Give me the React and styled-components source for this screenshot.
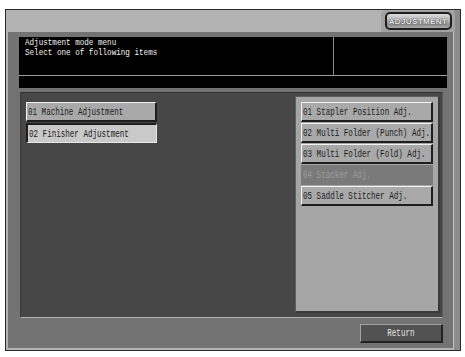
import React from 'react';
import styled, { createGlobalStyle } from 'styled-components';

const Global = createGlobalStyle`
  html, body { margin: 0; padding: 0; background: #ffffff; }
  body {
    width: 465px; height: 357px; overflow: hidden;
    font-family: "Liberation Mono", "DejaVu Sans Mono", monospace;
  }
  * { box-sizing: border-box; }
`;

const Frame = styled.div`
  margin: 9px 0 0 5px;
  width: 456px;
  height: 342px;
  border: 1px solid #2b2b2b;
  background: #b3b3b3;
  box-shadow: inset -6px 0 0 #8c8c8c;
  display: flex;
  flex-direction: column;
`;

const TopBar = styled.div`
  height: 23px;
  display: flex;
  justify-content: flex-end;
  align-items: flex-end;
  padding-right: 5px;
`;

const Tab = styled.div`
  width: 74px;
  height: 22px;
  background: #a2a2a2;
  border-radius: 5px 5px 0 0;
  display: flex;
  align-items: flex-start;
  justify-content: center;
  padding-top: 2px;
`;

const AdjButton = styled.div`
  width: 67px;
  height: 18px;
  border: 2px solid #1e1e1e;
  border-radius: 5px;
  background: linear-gradient(#dcdcdc 0%, #b4b4b4 45%, #8e8e8e 75%, #a8a8a8 100%);
  display: flex;
  align-items: center;
  justify-content: center;
  font-family: "Liberation Sans", Arial, sans-serif;
  font-weight: bold;
  font-size: 8px;
  letter-spacing: 0.4px;
  color: #ececec;
  text-shadow: 0 0 1px #303030, 0 0 1px #303030;
`;

const Inner = styled.div`
  flex: 1;
  margin: 0 7px 2px 2px;
  background: #737373;
  box-shadow: 1px 0 0 #c4c4c4;
  padding: 5px 6px 5px 11px;
  display: flex;
  flex-direction: column;
`;

const MessageBox = styled.div`
  height: 38px;
  background: #000;
  display: grid;
  grid-template-columns: 1fr 114px;
`;

const MessageText = styled.div`
  padding: 1px 0 0 6px;
  color: #f4f4f4;
  font-size: 9.5px;
  line-height: 9.5px;
  display: flex;
  flex-direction: column;
  align-items: flex-start;
`;

const MessageSide = styled.div`
  border-left: 1px solid #8a8a8a;
`;

const Rule = styled.div`
  height: 1px;
  background: #9c9c9c;
`;

const Strip = styled.div`
  height: 12px;
  background: #000;
`;

const Content = styled.div`
  margin: 4px 4px 0 1px;
  height: 226px;
  background: #474747;
  border-top: 1px solid #303030;
  border-left: 1px solid #3a3a3a;
  border-bottom: 1px solid #b2b2b2;
  border-right: 1px solid #5a5a5a;
  display: flex;
`;

const LeftList = styled.div`
  flex: 1;
  padding: 9px 0 0 5px;
  display: flex;
  flex-direction: column;
`;

const RightPanel = styled.div`
  width: 145px;
  margin: 3px 2px 4px 0;
  background: #a6a6a6;
  border-top: 1px solid #5e5e5e;
  border-left: 1px solid #5e5e5e;
  border-right: 2px solid #3a3a3a;
  border-bottom: 2px solid #3a3a3a;
  padding: 5px 0 0 5px;
  display: flex;
  flex-direction: column;
`;

const ItemButton = styled.div`
  width: ${p => p.$w}px;
  height: 20px;
  margin-bottom: 1px;
  display: flex;
  align-items: center;
  overflow: hidden;
  font-size: 10.5px;
  color: ${p => (p.$disabled ? '#9a9a9a' : '#1c1c1c')};
  background: ${p => (p.$disabled ? '#7a7a7a' : p.$selected ? '#c9c9c9' : '#a9a9a9')};
  border-style: solid;
  border-width: ${p => (p.$disabled ? '0' : p.$selected ? '2px 1px 1px 2px' : '1px 2px 2px 1px')};
  border-color: ${p =>
    p.$selected
      ? '#1e1e1e #e8e8e8 #e8e8e8 #1e1e1e'
      : '#f2f2f2 #1e1e1e #1e1e1e #f2f2f2'};
  padding-left: ${p => (p.$disabled ? '2px' : '1px')};
`;

const Label = styled.span`
  display: inline-block;
  white-space: nowrap;
  transform: scaleX(${p => p.$scale || 0.72});
  transform-origin: ${p => (p.$center ? 'center' : 'left')} center;
`;

const Footer = styled.div`
  margin-top: 6px;
  padding-right: 4px;
  display: flex;
  justify-content: flex-end;
`;

const ReturnButton = styled.div`
  width: 83px;
  height: 19px;
  background: #525252;
  border-style: solid;
  border-width: 1px 2px 2px 1px;
  border-color: #a0a0a0 #222 #222 #a0a0a0;
  display: flex;
  align-items: center;
  justify-content: center;
  color: #e2e2e2;
  font-size: 10.5px;
`;

const leftItems = [
  { label: '01 Machine Adjustment' },
  { label: '02 Finisher Adjustment', selected: true },
];

const rightItems = [
  { label: '01 Stapler Position Adj.' },
  { label: '02 Multi Folder (Punch) Adj.' },
  { label: '03 Multi Folder (Fold) Adj.' },
  { label: '04 Stacker Adj.', disabled: true },
  { label: '05 Saddle Stitcher Adj.' },
];

export default function App() {
  return (
    <>
      <Global />
      <Frame>
        <TopBar>
          <Tab>
            <AdjButton>ADJUSTMENT</AdjButton>
          </Tab>
        </TopBar>
        <Inner>
          <MessageBox>
            <MessageText>
              <Label $scale={0.8}>Adjustment mode menu</Label>
              <Label $scale={0.8}>Select one of following items</Label>
            </MessageText>
            <MessageSide />
          </MessageBox>
          <Rule />
          <Strip />
          <Content>
            <LeftList>
              {leftItems.map(it => (
                <ItemButton key={it.label} $w={131} $selected={it.selected}>
                  <Label>{it.label}</Label>
                </ItemButton>
              ))}
            </LeftList>
            <RightPanel>
              {rightItems.map(it => (
                <ItemButton key={it.label} $w={132} $disabled={it.disabled}>
                  <Label>{it.label}</Label>
                </ItemButton>
              ))}
            </RightPanel>
          </Content>
          <Footer>
            <ReturnButton>
              <Label $center>Return</Label>
            </ReturnButton>
          </Footer>
        </Inner>
      </Frame>
    </>
  );
}
